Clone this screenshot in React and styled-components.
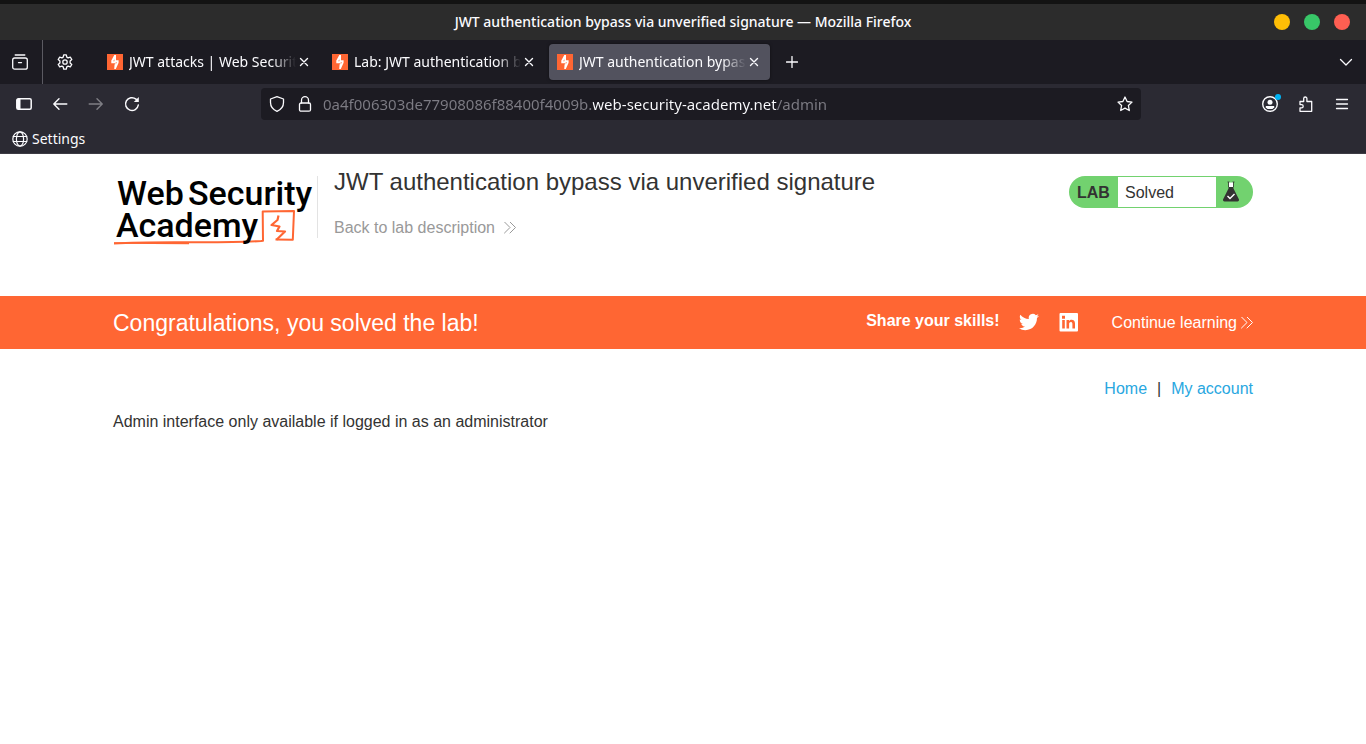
import React from "react";
import styled, { createGlobalStyle } from "styled-components";

const ORANGE = "#ff6633";
const UI_FONT = '"Noto Sans", "Open Sans", sans-serif';

const GlobalStyle = createGlobalStyle`
  *, *::before, *::after { box-sizing: border-box; }
  body {
    margin: 0;
    background: #fff;
    color: #333332;
    font-family: "Liberation Sans", Arial, sans-serif;
    font-size: 16px;
    line-height: 20px;
  }
  button { font: inherit; color: inherit; background: none; border: 0; padding: 0; }
  a { color: inherit; text-decoration: none; }
  h1, h2, p { margin: 0; font-weight: 400; }
  svg { display: block; flex: none; }
`;

/* Browser window */

const Chrome = styled.header`
  font-family: ${UI_FONT};
  font-size: 14px;
  color: #fbfbfe;
  background: #2b2a33;
  border-bottom: 1px solid #3d3c44;
`;

const TitleBar = styled.div`
  display: grid;
  grid-template-columns: 1fr auto 1fr;
  align-items: center;
  height: 40px;
  padding: 0 16px;
  background: #2c2c2c;
  border-top: 4px solid #131313;
`;

const WindowTitle = styled.span`
  grid-column: 2;
  font-weight: 500;
  white-space: nowrap;
`;

const WindowControls = styled.div`
  display: flex;
  justify-content: flex-end;
  gap: 14px;
`;

const WindowButton = styled.button`
  width: 16px;
  height: 16px;
  border-radius: 50%;
  background: ${(p) => p.$color};
`;

const TabStrip = styled.div`
  display: flex;
  align-items: center;
  height: 44px;
  background: #1c1b22;
`;

const ToolButton = styled.button`
  display: flex;
  align-items: center;
  justify-content: center;
  width: ${(p) => p.$width || 36}px;
  height: 36px;
  opacity: ${(p) => (p.$dim ? 0.4 : 1)};
`;

const ViewButton = styled(ToolButton)`
  width: 43px;
  height: 44px;
  padding-right: 2px;
  border-right: 1px solid #5b5a62;
`;

const Tabs = styled.div`
  display: flex;
  gap: 4px;
  margin: 0 4px 0 12px;
  min-width: 0;
`;

const Tab = styled.div`
  display: flex;
  align-items: center;
  width: 221px;
  height: 36px;
  padding: 0 11px 0 8px;
  border-radius: 4px;
  background: ${(p) => (p.$active ? "#52525e" : "transparent")};
  box-shadow: ${(p) => (p.$active ? "0 0 3px rgba(0, 0, 0, 0.5)" : "none")};
`;

const TabLabel = styled.button`
  flex: 1;
  min-width: 0;
  margin: 0 3px 0 6px;
  overflow: hidden;
  text-align: left;
  white-space: nowrap;
  mask-image: linear-gradient(to left, transparent, #000 24px);
`;

const Spacer = styled.div`
  flex: 1;
`;

const NavBar = styled.div`
  display: flex;
  align-items: center;
  height: 40px;
  padding: 0 6px;
`;

const NavGroup = styled.div`
  display: flex;
`;

const UrlBar = styled.div`
  display: flex;
  align-items: center;
  gap: 12px;
  flex: 0 1 880px;
  height: 32px;
  margin: 0 auto;
  padding: 0 8px;
  border-radius: 4px;
  background: #1c1b22;
`;

const UrlInput = styled.input`
  flex: 1;
  min-width: 0;
  height: 32px;
  margin-left: -2px;
  padding: 0;
  border: 0;
  outline: 0;
  font-family: ${UI_FONT};
  font-size: 15px;
  color: #fbfbfe;
  -webkit-text-fill-color: transparent;
  background: linear-gradient(to right, #7d7c84 270px, #fbfbfe 270px 454px, #7d7c84 454px);
  background-clip: text;
`;

const BookmarksBar = styled.nav`
  display: flex;
  height: 29px;
  padding: 0 12px;
`;

const Bookmark = styled.a`
  display: flex;
  align-items: center;
  gap: 4px;
`;

/* Lab page */

const Container = styled.div`
  width: 100%;
  max-width: 1140px;
  margin: 0 auto;
`;

const LabHeader = styled(Container)`
  display: flex;
  align-items: flex-start;
  min-height: 142px;
  padding-top: 14px;
`;

const LogoLink = styled.a`
  padding-top: 8px;
`;

const TitleBlock = styled.div`
  flex: 1;
`;

const LabTitle = styled.h1`
  padding-left: 17px;
  font-size: 24px;
  line-height: 28px;
`;

const Divider = styled.div`
  align-self: flex-start;
  width: 1px;
  height: 62px;
  margin: 8px -1px 0 4px;
  background: #e3e3e3;
`;

const BackLink = styled.a`
  display: inline-flex;
  align-items: center;
  gap: 9px;
  margin-top: 22px;
  padding-left: 17px;
  color: #999;
`;

const Status = styled.div`
  display: flex;
  align-items: stretch;
  width: 184px;
  height: 32px;
  margin-top: 8px;
  border-radius: 16px;
  background: #72d26f;
  line-height: 32px;
`;

const StatusTag = styled.strong`
  width: 49px;
  padding: 1px 0 0 8px;
`;

const StatusText = styled.p`
  width: 98px;
  margin: 1px 0;
  padding-left: 7px;
  background: #fff;
  line-height: 32px;
`;

const StatusIcon = styled.span`
  display: flex;
  align-items: center;
  padding-left: 6px;
`;

const Banner = styled.section`
  background: ${ORANGE};
  color: #fff;
`;

const BannerRow = styled(Container)`
  display: flex;
  align-items: center;
  height: 53px;
`;

const BannerTitle = styled.h2`
  flex: 1;
  font-size: 23px;
  line-height: 26px;
`;

const Share = styled.strong`
  padding-bottom: 4px;
  margin-right: 19px;
`;

const SocialLink = styled.a`
  margin-right: 20px;
  padding-bottom: 2px;
`;

const ContinueLink = styled.a`
  display: flex;
  align-items: center;
  gap: 4px;
  margin-left: 13px;
`;

const AccountNav = styled.nav`
  display: flex;
  justify-content: flex-end;
  gap: 10px;
  padding-top: 30px;
`;

const AccountLink = styled.a`
  color: #29a7df;
`;

const Message = styled.p`
  padding-top: 13px;
`;

/* Drawings */

const Icon = ({ children, size = 16, box = 16, sw = 1.3 }) => (
  <svg width={size} height={size} viewBox={`0 0 ${box} ${box}`} fill="none" stroke="currentColor"
    strokeWidth={sw} strokeLinecap="round" strokeLinejoin="round" aria-hidden="true">
    {children}
  </svg>
);

const ViewIcon = () => (
  <Icon>
    <path d="M3.2 1h9.6" />
    <rect x=".7" y="4" width="14.6" height="11.2" rx="2" />
    <path d="M6.5 8.6h3" />
  </Icon>
);

const GearIcon = () => (
  <Icon sw={1.3}>
    <path d="M6.700.800h2.600l.500 2.300 1.300.800 2.200-.800 1.500 2.400-1.700 1.500v2l1.700 1.500-1.500 2.400-2.200-.800-1.300.800-.500 2.300H6.700l-.500-2.300-1.300-.800-2.200.800-1.500-2.400L2.900 9V7L1.200 5.500l1.500-2.400 2.200.800 1.300-.800z" />
    <circle cx="8" cy="8" r="2.200" />
  </Icon>
);

const BurpIcon = () => (
  <svg width="16" height="16" viewBox="0 0 16 16" aria-hidden="true">
    <path fill={ORANGE} d="M0 0h16v16H0z" />
    <path fill="#fff" d="M7.300 1H9v5.200h2.600v2.600L8.800 15H7.200l.400-4.700H8V9.200H4.300V6.600z" />
    <path fill={ORANGE} d="M7.400 5.200L6.200 7.200H7.400zM8.700 8.200h1.200l-1.200 2.200z" />
  </svg>
);

const CloseIcon = () => (
  <Icon size={10} box={10} sw={1.4}><path d="M1.500 1.500l7 7M8.500 1.500l-7 7" /></Icon>
);

const PlusIcon = () => (
  <Icon size={12} box={12}><path d="M6 .500v11M.500 6h11" /></Icon>
);

const ChevronIcon = () => (
  <Icon size={14} box={14}><path d="M1.500 4.500L7 10l5.500-5.500" /></Icon>
);

const SidebarIcon = () => (
  <Icon sw={1.500}>
    <rect x=".800" y="2.800" width="14.400" height="10.400" rx="1.500" />
    <path d="M1 3h3.500v10H1z" fill="currentColor" stroke="none" />
  </Icon>
);

const BackIcon = () => (
  <Icon sw={1.400}><path d="M7 2.800L1.800 8 7 13.200M2 8h12.800" /></Icon>
);

const ForwardIcon = () => (
  <Icon sw={1.400}><path d="M9 2.800L14.200 8 9 13.200M14 8H1.200" /></Icon>
);

const ReloadIcon = () => (
  <Icon sw={1.500}>
    <path d="M14.300 9A6.400 6.400 0 1 1 12 3.100l1 1" />
    <path d="M14.800 1v5H9.800z" fill="currentColor" stroke="none" />
  </Icon>
);

const ShieldIcon = () => (
  <Icon>
    <path d="M8 .700L14.500 3v3.500c0 3.500-2.300 7-6.500 8.800C3.800 13.500 1.500 10 1.500 6.500V3z" />
  </Icon>
);

const LockIcon = () => (
  <Icon>
    <path d="M4.500 7V4.200a3.500 3.500 0 0 1 7 0V7" />
    <rect x="2.500" y="7" width="11" height="8.200" rx="1.500" />
  </Icon>
);

const StarIcon = () => (
  <Icon>
    <path d="M8 1l2.100 4.500 4.900.600-3.600 3.400.900 5L8 12.100 3.700 14.500l.900-5L1 6.100l4.900-.600z" />
  </Icon>
);

const ProfileIcon = () => (
  <svg width="20" height="20" viewBox="0 0 20 20" overflow="visible" aria-hidden="true">
    <circle cx="10" cy="10" r="7.300" fill="none" stroke="currentColor" strokeWidth="1.400" />
    <circle cx="10" cy="8.200" r="2.500" fill="currentColor" />
    <path fill="currentColor" d="M5.800 12h8.400v1.200L12.500 15h-5l-1.700-1.800z" />
    <circle cx="18" cy="3" r="3" fill="#00b3f4" />
  </svg>
);

const ExtensionIcon = () => (
  <Icon>
    <path d="M2 5.500h3.700V2.600a1.600 1.600 0 0 1 3.200 0v2.900h4.800v9.800H2v-3.500h1.600a1.600 1.600 0 0 0 0-3.200H2z" />
  </Icon>
);

const MenuIcon = () => (
  <Icon sw={1.300}><path d="M2.500 3.500h11M2.500 8h11M2.500 12.500h11" /></Icon>
);

const GlobeIcon = () => (
  <Icon sw={1.200}>
    <circle cx="8" cy="8" r="7.200" />
    <ellipse cx="8" cy="8" rx="3.600" ry="7.200" />
    <path d="M1.300 5.500h13.400M1.300 10.500h13.400" />
  </Icon>
);

const DoubleChevron = () => (
  <Icon size={12} box={12} sw={1}><path d="M.500 0L6 5.500 .500 11M6 0L11.500 5.500 6 11" /></Icon>
);

const FlaskIcon = () => (
  <svg width="18" height="22" viewBox="0 0 18 22" aria-hidden="true">
    <path d="M6.500 1v5M11.500 1v5M5.500 1h2M10.500 1h2" fill="none" stroke="#333332" strokeWidth=".800" />
    <path fill="#fff" d="M7 1.500h4V6H7z" />
    <path fill="#333332" d="M6.500 6h5v1.500L17 18.500q.300 2-1.500 2h-13q-1.800 0-1.500-2L6.500 7.500z" />
    <path d="M5.500 15l2.500 2.500 4.500-4.500" fill="none" stroke="#fff" strokeWidth="1.400" />
  </svg>
);

const TwitterIcon = () => (
  <svg width="20" height="20" viewBox="0 0 24 24" fill="currentColor" aria-hidden="true">
    <path d="M23.950 4.570a10 10 0 0 1-2.820.770 4.960 4.960 0 0 0 2.160-2.720c-.950.550-2 .950-3.120 1.180a4.920 4.920 0 0 0-8.390 4.480C7.690 8.090 4.070 6.130 1.640 3.160a4.820 4.820 0 0 0-.670 2.480c0 1.710.870 3.210 2.190 4.100a4.900 4.900 0 0 1-2.230-.620v.060a4.920 4.920 0 0 0 3.950 4.830 5 5 0 0 1-2.210.080 4.940 4.940 0 0 0 4.600 3.420A9.870 9.870 0 0 1 0 19.540a13.990 13.990 0 0 0 7.560 2.210c9.050 0 14-7.500 14-13.980 0-.210 0-.420-.020-.630a9.940 9.940 0 0 0 2.460-2.550z" />
  </svg>
);

const LinkedInIcon = () => (
  <svg width="20" height="20" viewBox="0 0 20 20" aria-hidden="true">
    <rect x=".500" y="1" width="18.500" height="18.500" rx="1" fill="#fff" />
    <path fill={ORANGE} d="M3.200 8h2.600v8.500H3.200zM3 3.700h3v3H3zM7.500 8H10v1.200c1.300-2.200 6-2 6 2.200v5.100h-2.600V12c0-2.700-3.300-2.500-3.300 0v4.500H7.500z" />
  </svg>
);

const AcademyLogo = () => (
  <svg width="200" height="72" viewBox="0 0 200 72" role="img" aria-label="Web Security Academy">
    <g fill="none" stroke={ORANGE} strokeLinejoin="round">
      <path d="M1 67.500C50 64.500 100 68 148 65l2-.300-.300-29.200 31.300-.500-1.200 28.800-17.300-.300" strokeWidth="2" />
      <path d="M1 67l75 .500" strokeWidth="1.500" />
      <path d="M165.500 39.500l-1 4.500-6 5 8 1.500-2.500 4.500 8 .500-8.500 8.300" strokeWidth="2.200" />
    </g>
    <g fill="#000" fontFamily="Roboto, sans-serif" fontSize="34" fontWeight="500">
      <text x="4" y="29">Web</text>
      <text x="75" y="29">Security</text>
      <text x="3" y="61">Academy</text>
    </g>
  </svg>
);

const TABS = [
  { title: "JWT attacks | Web Security" },
  { title: "Lab: JWT authentication by" },
  { title: "JWT authentication bypass", active: true },
];

function BrowserTab({ title, active }) {
  return (
    <Tab $active={active}>
      <BurpIcon />
      <TabLabel>{title}</TabLabel>
      <button aria-label="Close tab"><CloseIcon /></button>
    </Tab>
  );
}

function BrowserChrome() {
  return (
    <Chrome>
      <TitleBar>
        <WindowTitle>JWT authentication bypass via unverified signature — Mozilla Firefox</WindowTitle>
        <WindowControls>
          <WindowButton $color="#ffbe06" aria-label="Minimize" />
          <WindowButton $color="#38c768" aria-label="Maximize" />
          <WindowButton $color="#ff5f52" aria-label="Close" />
        </WindowControls>
      </TitleBar>
      <TabStrip>
        <ViewButton aria-label="Recent browsing"><ViewIcon /></ViewButton>
        <ToolButton $width={44} aria-label="Settings tab"><GearIcon /></ToolButton>
        <Tabs>
          {TABS.map((tab) => <BrowserTab key={tab.title} {...tab} />)}
        </Tabs>
        <ToolButton aria-label="New tab"><PlusIcon /></ToolButton>
        <Spacer />
        <ToolButton $width={40} aria-label="List all tabs"><ChevronIcon /></ToolButton>
      </TabStrip>
      <NavBar>
        <NavGroup>
          <ToolButton aria-label="Sidebar"><SidebarIcon /></ToolButton>
          <ToolButton aria-label="Back"><BackIcon /></ToolButton>
          <ToolButton $dim aria-label="Forward"><ForwardIcon /></ToolButton>
          <ToolButton aria-label="Reload"><ReloadIcon /></ToolButton>
        </NavGroup>
        <UrlBar>
          <ShieldIcon />
          <LockIcon />
          <UrlInput
            aria-label="Address"
            defaultValue="0a4f006303de77908086f88400f4009b.web-security-academy.net/admin"
          />
          <button aria-label="Bookmark this page"><StarIcon /></button>
        </UrlBar>
        <NavGroup>
          <ToolButton aria-label="Account"><ProfileIcon /></ToolButton>
          <ToolButton aria-label="Extensions"><ExtensionIcon /></ToolButton>
          <ToolButton aria-label="Menu"><MenuIcon /></ToolButton>
        </NavGroup>
      </NavBar>
      <BookmarksBar>
        <Bookmark href="#settings"><GlobeIcon />Settings</Bookmark>
      </BookmarksBar>
    </Chrome>
  );
}

export default function App() {
  return (
    <>
      <GlobalStyle />
      <BrowserChrome />
      <main>
        <LabHeader>
          <LogoLink href="#academy"><AcademyLogo /></LogoLink>
          <Divider />
          <TitleBlock>
            <LabTitle>JWT authentication bypass via unverified signature</LabTitle>
            <BackLink href="#lab">Back to lab description <DoubleChevron /></BackLink>
          </TitleBlock>
          <Status>
            <StatusTag>LAB</StatusTag>
            <StatusText>Solved</StatusText>
            <StatusIcon><FlaskIcon /></StatusIcon>
          </Status>
        </LabHeader>
        <Banner>
          <BannerRow>
            <BannerTitle>Congratulations, you solved the lab!</BannerTitle>
            <Share>Share your skills!</Share>
            <SocialLink href="#twitter" aria-label="Twitter"><TwitterIcon /></SocialLink>
            <SocialLink href="#linkedin" aria-label="LinkedIn"><LinkedInIcon /></SocialLink>
            <ContinueLink href="#continue">Continue learning <DoubleChevron /></ContinueLink>
          </BannerRow>
        </Banner>
        <Container>
          <AccountNav>
            <AccountLink href="#home">Home</AccountLink>
            <span>|</span>
            <AccountLink href="#account">My account</AccountLink>
          </AccountNav>
          <Message>Admin interface only available if logged in as an administrator</Message>
        </Container>
      </main>
    </>
  );
}
